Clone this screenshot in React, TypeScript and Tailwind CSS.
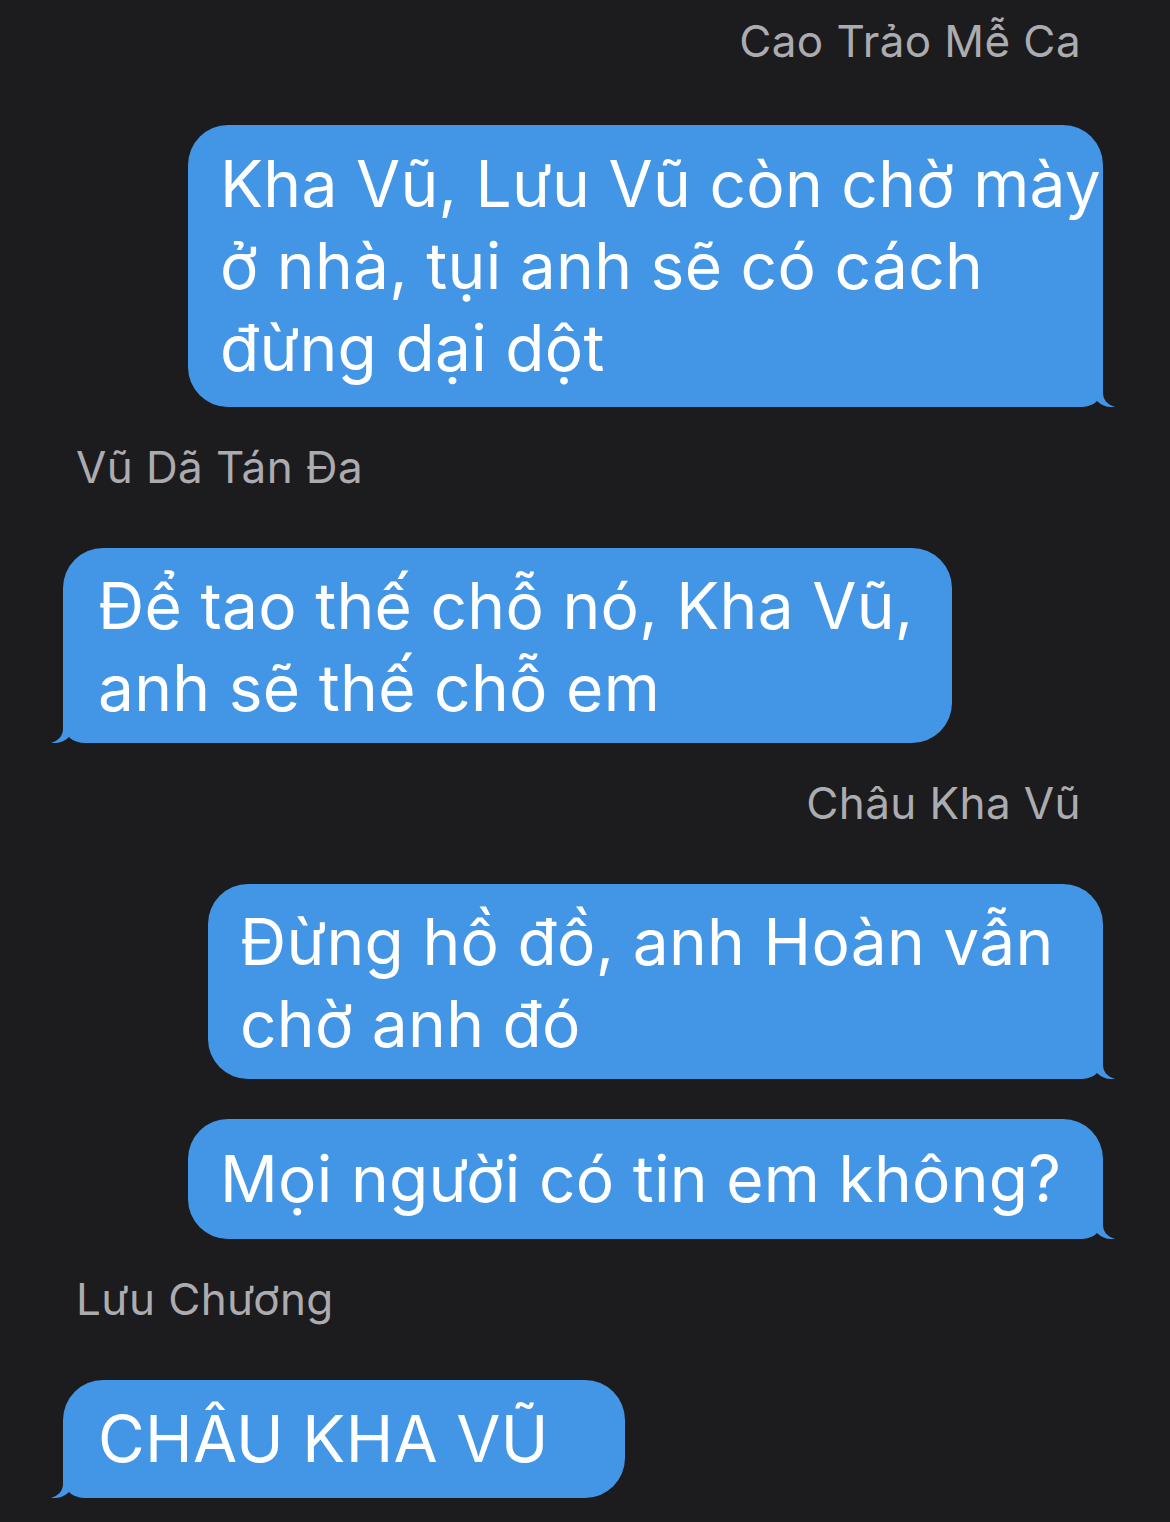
import React from "react";

type Msg = {
  name?: string;
  side: "left" | "right";
  lines: string[];
  width: number;
  pad: string;
};

const messages: Msg[] = [
  {
    name: "Cao Trảo Mễ Ca",
    side: "right",
    width: 915,
    pad: "pt-[18px] pb-[18px]",
    lines: ["Kha Vũ, Lưu Vũ còn chờ mày", "ở nhà, tụi anh sẽ có cách", "đừng dại dột"],
  },
  {
    name: "Vũ Dã Tán Đa",
    side: "left",
    width: 889,
    pad: "pt-[17px] pb-[14px]",
    lines: ["Để tao thế chỗ nó, Kha Vũ,", "anh sẽ thế chỗ em"],
  },
  {
    name: "Châu Kha Vũ",
    side: "right",
    width: 895,
    pad: "pt-[17px] pb-[14px]",
    lines: ["Đừng hồ đồ, anh Hoàn vẫn", "chờ anh đó"],
  },
  {
    side: "right",
    width: 915,
    pad: "pt-[19px] pb-[19px]",
    lines: ["Mọi người có tin em không?"],
  },
  {
    name: "Lưu Chương",
    side: "left",
    width: 562,
    pad: "pt-[18px] pb-[18px]",
    lines: ["CHÂU KHA VŨ"],
  },
];

function Tail({ side }: { side: "left" | "right" }) {
  return (
    <svg
      width="52"
      height="44"
      viewBox="0 0 52 44"
      className={
        side === "right"
          ? "absolute bottom-0 right-[-12px]"
          : "absolute bottom-0 left-[-12px] -scale-x-100"
      }
    >
      <path
        d="M0 0 L40 0 L40 30 C40 37 45 42 52 44 C45 44.5 39 43 34 38 C30 42 24 44 16 44 L0 44 Z"
        fill="#4396e6"
      />
    </svg>
  );
}

function Bubble({ msg }: { msg: Msg }) {
  return (
    <div
      className={`relative rounded-[40px] bg-[#4396e6] ${msg.pad} text-white text-[64px] leading-[82px] tracking-[0.3px] whitespace-nowrap ${
        msg.side === "right" ? "self-end pl-[32px]" : "self-start ml-[-4px] pl-[35px]"
      }`}
      style={{ width: msg.width }}
    >
      <Tail side={msg.side} />
      <div className="relative">
        {msg.lines.map((l, i) => (
          <div key={i}>{l}</div>
        ))}
      </div>
    </div>
  );
}

export default function App() {
  return (
    <div
      className="min-h-screen bg-[#1c1c1e] px-[67px] pt-[11px] pb-[22px] flex flex-col"
      style={{ fontFamily: "Inter, 'Noto Sans', sans-serif" }}
    >
      {messages.map((m, i) => (
        <div key={i} className={`flex flex-col ${m.name ? "" : "mt-[40px]"}`}>
          {m.name && (
            <div
              className={`text-[44px] leading-[60px] tracking-[0.4px] text-[#acacb0] ${
                m.side === "right" ? "self-end pr-[22px]" : "self-start pl-[9px]"
              } ${i === 0 ? "mb-[54px]" : "mt-[30px] mb-[51px]"}`}
            >
              {m.name}
            </div>
          )}
          <Bubble msg={m} />
        </div>
      ))}
    </div>
  );
}
